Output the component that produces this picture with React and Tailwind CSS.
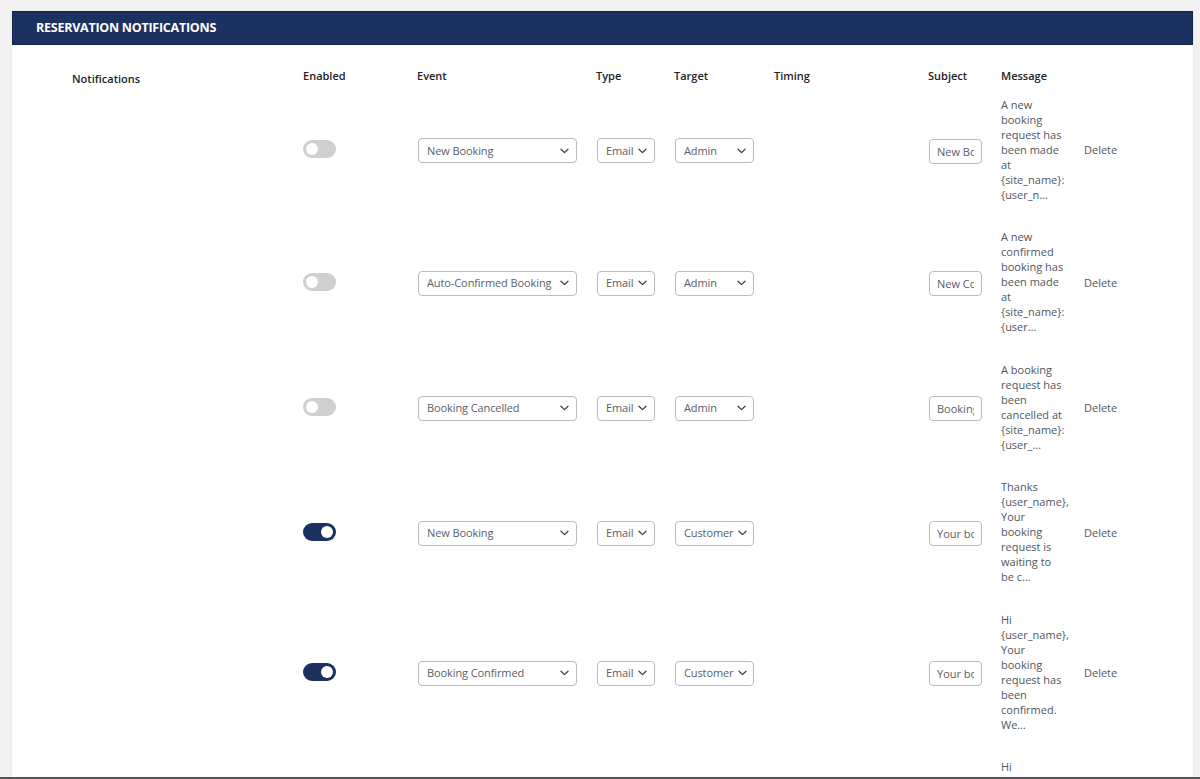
import React from "react";

const rows = [
  {
    on: false,
    event: "New Booking",
    target: "Admin",
    subject: "New Booking Request",
    msg: ["A new", "booking", "request has", "been made", "at", "{site_name}:", "{user_n…"],
  },
  {
    on: false,
    event: "Auto-Confirmed Booking",
    target: "Admin",
    subject: "New Confirmed Booking",
    msg: ["A new", "confirmed", "booking has", "been made", "at", "{site_name}:", "{user…"],
  },
  {
    on: false,
    event: "Booking Cancelled",
    target: "Admin",
    subject: "Booking Cancelled",
    msg: ["A booking", "request has", "been", "cancelled at", "{site_name}:", "{user_…"],
  },
  {
    on: true,
    event: "New Booking",
    target: "Customer",
    subject: "Your booking request",
    msg: ["Thanks", "{user_name},", "Your", "booking", "request is", "waiting to", "be c…"],
  },
  {
    on: true,
    event: "Booking Confirmed",
    target: "Customer",
    subject: "Your booking is confirmed",
    msg: ["Hi", "{user_name},", "Your", "booking", "request has", "been", "confirmed.", "We…"],
  },
  {
    on: true,
    event: "Booking Rejected",
    target: "Customer",
    subject: "Your booking was rejected",
    msg: ["Hi", "{user_name},", "Your", "booking", "request has", "been", "rejected.", "We…"],
  },
];

function Chevron() {
  return (
    <svg width="9" height="6" viewBox="0 0 9 6" fill="none" className="shrink-0">
      <path d="M1 1.2l3.5 3.4L8 1.2" stroke="#3c434a" strokeWidth="1.3" strokeLinecap="round" strokeLinejoin="round" />
    </svg>
  );
}

function Select({ value, w }) {
  return (
    <div
      className={`${w} h-[25px] flex items-center justify-between gap-[4px] pl-[8px] pr-[7px] border border-[#b9bcc0] rounded-[4px] bg-white text-[11px] text-[#5a6066] whitespace-nowrap overflow-hidden`}
    >
      <span className="tracking-[-0.1px]">{value}</span>
      <Chevron />
    </div>
  );
}

function Toggle({ on }) {
  return on ? (
    <div className="w-[33px] h-[18px] rounded-full bg-[#1b3160] flex items-center justify-end pr-[3px]">
      <div className="w-[12px] h-[12px] rounded-full bg-white" />
    </div>
  ) : (
    <div className="w-[33px] h-[18px] rounded-full bg-[#cfcfcf] flex items-center pl-[3px]">
      <div className="w-[12px] h-[12px] rounded-full bg-white" />
    </div>
  );
}

const cols = "grid grid-cols-[114px_179px_78px_100px_154px_73px_83px_1fr]";

export default function App() {
  return (
    <div
      className="h-[779px] overflow-hidden flex flex-col bg-[#f3f3f3]"
      style={{ fontFamily: '"Open Sans", "Noto Sans", Arial, sans-serif' }}
    >
      <div className="flex-1 overflow-hidden pt-[11px] pl-[12px] pr-[7px]">
        <div className="bg-white h-full shadow-[0_0_3px_rgba(0,0,0,0.08)]">
          <div className="h-[34px] bg-[#1b3160] flex items-center pl-[23px] border border-[#15264b]">
            <h2 className="text-white font-bold text-[12.5px] tracking-[-0.25px]">RESERVATION NOTIFICATIONS</h2>
          </div>
          <div className="flex pt-[23px]">
            <div className="w-[291px] shrink-0 pl-[60px] pt-[3px]">
              <div className="text-[11px] leading-[15px] font-semibold text-[#1d2327]">Notifications</div>
            </div>
            <div className="flex-1">
              <div className={`${cols} text-[11px] leading-[15px] font-semibold text-[#1d2327]`}>
                <div>Enabled</div>
                <div>Event</div>
                <div>Type</div>
                <div>Target</div>
                <div>Timing</div>
                <div>Subject</div>
                <div>Message</div>
                <div></div>
              </div>
              {rows.map((r, i) => (
                <div key={i} className={`${cols} items-center py-[13.75px]`}>
                  <div>
                    <Toggle on={r.on} />
                  </div>
                  <div className="pl-[1px] pt-[3px]">
                    <Select value={r.event} w="w-[159px]" />
                  </div>
                  <div className="pl-[1px] pt-[3px]">
                    <Select value="Email" w="w-[58px]" />
                  </div>
                  <div className="pl-[1px] pt-[3px]">
                    <Select value={r.target} w="w-[79px]" />
                  </div>
                  <div></div>
                  <div className="pl-[1px] pt-[3px]">
                    <input
                      readOnly
                      value={r.subject}
                      className="w-[53px] h-[25px] px-[7px] border border-[#b9bcc0] rounded-[4px] text-[11px] text-[#5a6066] bg-white outline-none"
                    />
                  </div>
                  <div className="text-[11px] leading-[15px] text-[#50575e]">
                    {r.msg.map((l, j) => (
                      <div key={j} className="whitespace-nowrap">
                        {l}
                      </div>
                    ))}
                  </div>
                  <div className="text-[11px] text-[#50575e] pt-[2px]">Delete</div>
                </div>
              ))}
            </div>
          </div>
        </div>
      </div>
      <div className="h-[2px] bg-[#555555] shrink-0" />
    </div>
  );
}
